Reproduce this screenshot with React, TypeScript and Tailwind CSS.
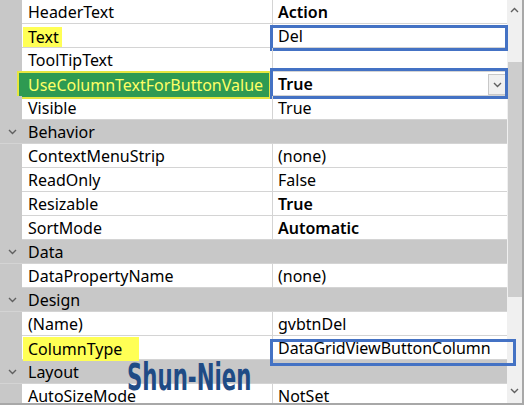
import React from 'react';

type Prop = { name: string; value: string; bold?: boolean };

const font = { fontFamily: '"Noto Sans", "Open Sans", sans-serif' };

function Chevron({ up = false }: { up?: boolean }) {
  return (
    <svg width="9" height="6" viewBox="0 0 9 6" className="block">
      <polyline
        points={up ? '1,5 4.5,1.5 8,5' : '1,1 4.5,4.5 8,1'}
        fill="none"
        stroke="#606060"
        strokeWidth="1.4"
      />
    </svg>
  );
}

function Row({ name, value, bold, children }: Prop & { children?: React.ReactNode }) {
  return (
    <div className="relative flex h-[24px] shrink-0">
      <div className="w-[22px] bg-[#c8c8c8]" />
      <div className="flex w-[251px] items-center border-b border-r border-[#d4d4d4] pl-[6px] text-[16px] text-black">
        {name}
      </div>
      <div
        className={`flex flex-1 items-center border-b border-[#d4d4d4] pl-[5px] text-[16px] text-black ${
          bold ? 'font-semibold' : ''
        }`}
      >
        {value}
      </div>
      {children}
    </div>
  );
}

function Category({ name }: { name: string }) {
  return (
    <div className="flex h-[24px] shrink-0 items-center bg-[#c8c8c8] border-b border-[#d4d4d4]">
      <div className="flex w-[22px] justify-center pl-[2px]">
        <Chevron />
      </div>
      <div className="pl-[6px] text-[16px] text-black">{name}</div>
    </div>
  );
}

export default function App() {
  return (
    <div className="relative flex h-[405px] w-[524px] overflow-hidden bg-white" style={font}>
      <div className="flex w-[507px] flex-col">
        <Row name="HeaderText" value="Action" bold />
        <Row name="" value="Del">
          <span className="absolute left-[23px] top-[3px] flex h-[20px] items-center bg-[#ffff55] pl-[5px] pr-[3px] text-[16px] text-black">
            Text
          </span>
          <div className="absolute left-[270px] top-[1px] h-[26px] w-[238px] border-[3px] border-[#4472c4]" />
        </Row>
        <Row name="ToolTipText" value="" />
        <Row name="" value="True" bold>
          <div className="absolute left-[17px] top-[-1px] flex h-[28px] w-[254px] items-center border-2 border-[#e6e640] bg-[#2e9a52] pl-[9px] text-[16px] text-[#ffff66]">
            UseColumnTextForButtonValue
          </div>
          <div className="absolute left-[488px] top-[2px] flex h-[21px] w-[18px] items-center justify-center border border-[#c8c8c8] bg-[#f0f0f0]">
            <Chevron />
          </div>
          <div className="absolute left-[270px] top-[-4px] h-[31px] w-[238px] border-[3px] border-[#4472c4]" />
        </Row>
        <Row name="Visible" value="True" />
        <Category name="Behavior" />
        <Row name="ContextMenuStrip" value="(none)" />
        <Row name="ReadOnly" value="False" />
        <Row name="Resizable" value="True" bold />
        <Row name="SortMode" value="Automatic" bold />
        <Category name="Data" />
        <Row name="DataPropertyName" value="(none)" />
        <Category name="Design" />
        <Row name="(Name)" value="gvbtnDel" />
        <Row name="" value="DataGridViewButtonColumn">
          <span className="absolute left-[23px] top-[1px] flex h-[24px] w-[116px] items-center bg-[#ffff55] pl-[5px] text-[16px] text-black">
            ColumnType
          </span>
          <div className="absolute left-[270px] top-[3px] h-[27px] w-[246px] border-[3px] border-[#4472c4]" />
        </Row>
        <Category name="Layout" />
        <Row name="AutoSizeMode" value="NotSet" />
      </div>
      <div className="flex w-[15px] flex-col items-center bg-[#f0f0f0]">
        <div className="flex h-[20px] items-center justify-center">
          <Chevron up />
        </div>
        <div className="mt-[42px] h-[235px] w-[14px] bg-[#cdcdcd]" />
        <div className="flex-1" />
        <div className="mb-[4px] flex h-[20px] items-center justify-center">
          <Chevron />
        </div>
      </div>
      <div className="w-[2px] bg-[#a8a8a8]" />
      <div className="absolute bottom-0 left-0 h-[2px] w-full bg-[#a8a8a8]" />
      <div
        className="absolute left-[127px] top-[359px] text-[37px] font-bold leading-none text-[#1f4b85]"
        style={{ fontFamily: '"DejaVu Sans Condensed", "DejaVu Sans", sans-serif', transform: 'scaleX(0.64)', transformOrigin: 'left' }}
      >
        Shun-Nien
      </div>
    </div>
  );
}
